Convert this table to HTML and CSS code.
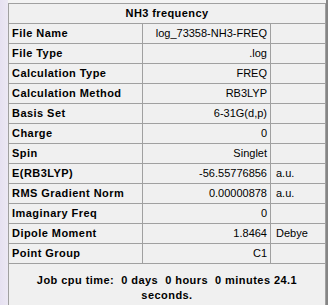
FILE: index.html
```html
<!DOCTYPE html>
<html lang="en">
<head>
  <meta charset="UTF-8">
  <meta name="viewport" content="width=device-width, initial-scale=1.0">
  <title>NH3 frequency</title>
  <link rel="stylesheet" href="styles.css">
</head>
<body>
  <div class="summary">
    <div class="summary-title">NH3 frequency</div>
    <div class="row"><span class="label">File Name</span><span class="value">log_73358-NH3-FREQ</span><span class="unit"></span></div>
    <div class="row"><span class="label">File Type</span><span class="value">.log</span><span class="unit"></span></div>
    <div class="row"><span class="label">Calculation Type</span><span class="value">FREQ</span><span class="unit"></span></div>
    <div class="row"><span class="label">Calculation Method</span><span class="value">RB3LYP</span><span class="unit"></span></div>
    <div class="row"><span class="label">Basis Set</span><span class="value">6-31G(d,p)</span><span class="unit"></span></div>
    <div class="row"><span class="label">Charge</span><span class="value">0</span><span class="unit"></span></div>
    <div class="row"><span class="label">Spin</span><span class="value">Singlet</span><span class="unit"></span></div>
    <div class="row"><span class="label">E(RB3LYP)</span><span class="value">-56.55776856</span><span class="unit">a.u.</span></div>
    <div class="row"><span class="label">RMS Gradient Norm</span><span class="value">0.00000878</span><span class="unit">a.u.</span></div>
    <div class="row"><span class="label">Imaginary Freq</span><span class="value">0</span><span class="unit"></span></div>
    <div class="row"><span class="label">Dipole Moment</span><span class="value">1.8464</span><span class="unit">Debye</span></div>
    <div class="row"><span class="label">Point Group</span><span class="value">C1</span><span class="unit"></span></div>
    <p class="job-time">Job cpu time:  0 days  0 hours  0 minutes 24.1 seconds.</p>
  </div>
</body>
</html>
```

FILE: styles.css
```css
html, body {
  margin: 0;
  height: 100%;
  overflow: hidden;
}
body {
  padding: 3px 0 0 8px;
  box-sizing: border-box;
  font-family: "Liberation Sans", Arial, sans-serif;
  font-size: 11px;
  color: #000;
  background: linear-gradient(to right, #e6e1f1 0, #ece8f4 8px, #f3f3f3 8px, #f3f3f3 326px, #858585 326px);
}
.summary {
  width: 316px;
  height: 301px;
  overflow: hidden;
  background: #f0f0f0;
  border: 1px solid #a0a0a0;
  border-bottom: none;
}
.summary-title {
  height: 19px;
  line-height: 19px;
  text-align: center;
  font-weight: bold;
  letter-spacing: 0.4px;
  border-bottom: 1px solid #a0a0a0;
}
.row {
  display: grid;
  grid-template-columns: 133px 127px 1fr;
  column-gap: 1px;
  height: 19px;
  line-height: 19px;
  border-bottom: 1px solid #a0a0a0;
  background: #a0a0a0;
}
.row span {
  background: #f0f0f0;
  white-space: nowrap;
}
/* bold labels run a bit wider than plain Arial bold */
.label {
  font-weight: bold;
  letter-spacing: 0.45px;
  padding-left: 3px;
}
.value {
  text-align: right;
  padding-right: 3px;
}
.unit {
  padding-left: 5px;
}
.job-time {
  margin: 0;
  padding: 9px 12px 0;
  line-height: 15px;
  font-weight: bold;
  letter-spacing: 0.45px;
  text-align: center;
  white-space: pre-wrap;
}
```
